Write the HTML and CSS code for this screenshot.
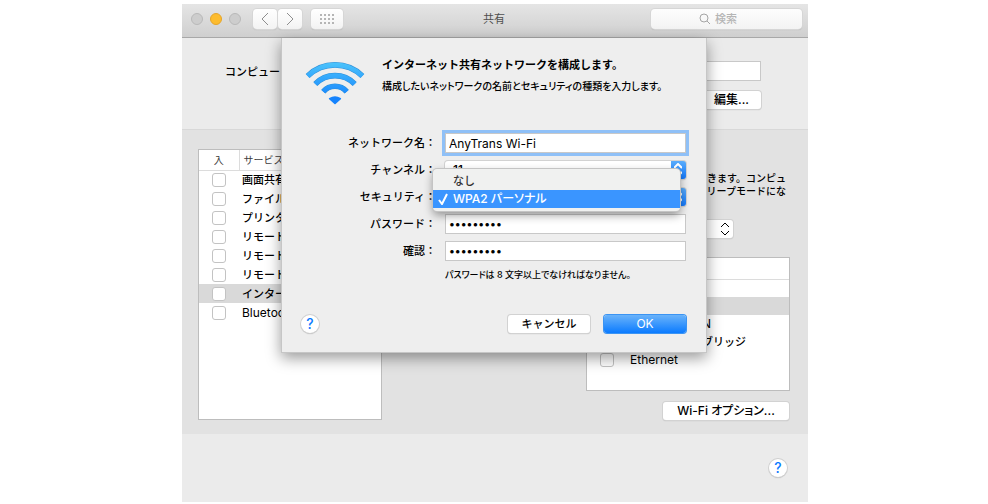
FILE: index.html
```html
<!DOCTYPE html>
<html lang="ja">
<head>
<meta charset="utf-8">
<title>共有</title>
<link rel="stylesheet" href="styles.css">
</head>
<body>
<main class="window">
  <header class="titlebar">
    <div class="lights">
      <span class="light"></span>
      <span class="light light-amber"></span>
      <span class="light"></span>
    </div>
    <nav class="nav">
      <button class="tool" type="button" aria-label="戻る"><svg width="8" height="14" viewBox="0 0 8 14"><path d="M7 1 1 7l6 6"/></svg></button>
      <button class="tool" type="button" aria-label="進む"><svg width="8" height="14" viewBox="0 0 8 14"><path d="m1 1 6 6-6 6"/></svg></button>
    </nav>
    <button class="tool tool-grid" type="button" aria-label="すべてを表示">
      <svg width="14" height="10" viewBox="0 0 14 10"><path class="dots" d="M0 0h2v2H0zM4 0h2v2H4zM8 0h2v2H8zM12 0h2v2h-2zM0 4h2v2H0zM4 4h2v2H4zM8 4h2v2H8zM12 4h2v2h-2zM0 8h2v2H0zM4 8h2v2H4zM8 8h2v2H8zM12 8h2v2h-2z"/></svg>
    </button>
    <h1 class="title">共有</h1>
    <label class="search">
      <svg width="12" height="12" viewBox="0 0 12 12"><circle cx="5" cy="5" r="4"/><path d="m8 8 3 3"/></svg>
      <input type="search" placeholder="検索" aria-label="検索">
    </label>
  </header>

  <section class="computer">
    <label for="computer-name">コンピュー</label>
    <div class="computer-fields">
      <input class="field" id="computer-name" type="text">
      <button class="button edit" type="button">編集...</button>
    </div>
  </section>

  <section class="pane">
    <div class="services">
      <table>
        <thead><tr><th class="on">入</th><th>サービス</th></tr></thead>
        <tbody>
          <tr><td class="on"><input type="checkbox" id="s1"></td><td><label for="s1">画面共有</label></td></tr>
          <tr><td class="on"><input type="checkbox" id="s2"></td><td><label for="s2">ファイル</label></td></tr>
          <tr><td class="on"><input type="checkbox" id="s3"></td><td><label for="s3">プリンタ</label></td></tr>
          <tr><td class="on"><input type="checkbox" id="s4"></td><td><label for="s4">リモート</label></td></tr>
          <tr><td class="on"><input type="checkbox" id="s5"></td><td><label for="s5">リモート</label></td></tr>
          <tr><td class="on"><input type="checkbox" id="s6"></td><td><label for="s6">リモート</label></td></tr>
          <tr class="selected"><td class="on"><input type="checkbox" id="s7"></td><td><label for="s7">インター</label></td></tr>
          <tr><td class="on"><input type="checkbox" id="s8"></td><td class="latin"><label for="s8">Bluetoo</label></td></tr>
        </tbody>
      </table>
    </div>
    <div class="details">
      <p class="note">できます。コンピュ<br>スリープモードにな</p>
      <span class="select source">
        <select aria-label="共有する接続経路"></select>
        <svg width="8" height="14" viewBox="0 0 8 14"><path d="m0 5 4-4 4 4M0 9l4 4 4-4"/></svg>
      </span>
      <div class="ports">
        <table>
          <thead><tr><th class="on"></th><th></th></tr></thead>
          <tbody>
            <tr><td class="on"></td><td></td></tr>
            <tr class="selected"><td class="on"></td><td></td></tr>
            <tr><td class="on"></td><td class="tail latin">N</td></tr>
            <tr><td class="on"></td><td class="tail">ブリッジ</td></tr>
            <tr><td class="on"><input type="checkbox" id="p5"></td><td class="latin"><label for="p5">Ethernet</label></td></tr>
          </tbody>
        </table>
      </div>
      <button class="button options" type="button">Wi-Fi オプション...</button>
    </div>
  </section>

  <footer class="footer"><button class="help" type="button">?</button></footer>

  <form class="sheet" role="dialog" aria-labelledby="sheet-title">
    <div class="intro">
      <svg class="wifi" width="60" height="44" viewBox="45 62 180 132">
        <defs>
          <linearGradient id="wave" gradientUnits="userSpaceOnUse" x1="0" y1="66" x2="0" y2="192">
            <stop offset="0" stop-color="#4cc4fb"/><stop offset="1" stop-color="#0b78fe"/>
          </linearGradient>
        </defs>
        <path class="edge" d="M53 107A118 118 0 0 1 217 107M76 131A82 82 0 0 1 194 131M100 154A46 46 0 0 1 170 154"/>
        <path class="wave" d="M53 107A118 118 0 0 1 217 107M76 131A82 82 0 0 1 194 131M100 154A46 46 0 0 1 170 154"/>
        <path class="dot" d="M119 175Q135 166 151 175L135 189Z"/>
      </svg>
      <div>
        <h2 id="sheet-title">インターネット共有ネットワークを構成します。</h2>
        <p>構成したいネットワークの名前とセキュリティの種類を入力します。</p>
      </div>
    </div>
    <div class="form">
      <label for="ssid">ネットワーク名：</label>
      <input class="field focused" id="ssid" type="text" value="AnyTrans Wi-Fi">
      <label for="channel">チャンネル：</label>
      <span class="select accent">
        <select id="channel"><option>11</option></select>
        <svg width="8" height="14" viewBox="0 0 8 14"><path d="m0 5 4-4 4 4M0 9l4 4 4-4"/></svg>
      </span>
      <label for="security">セキュリティ：</label>
      <span class="select accent">
        <select id="security"></select>
        <svg width="8" height="14" viewBox="0 0 8 14"><path d="m0 5 4-4 4 4M0 9l4 4 4-4"/></svg>
        <span class="menu" role="listbox" aria-label="セキュリティ">
          <span class="item" role="option">なし</span>
          <span class="item active" role="option" aria-selected="true"><svg width="10" height="12" viewBox="0 0 10 12"><path d="m1 7 3 4 5-10"/></svg>WPA2 パーソナル</span>
        </span>
      </span>
      <label for="password">パスワード：</label>
      <input class="field" id="password" type="password" value="123456789">
      <label for="confirm">確認：</label>
      <input class="field" id="confirm" type="password" value="123456789">
    </div>
    <p class="hint">パスワードは 8 文字以上でなければなりません。</p>
    <div class="actions">
      <button class="help" type="button">?</button>
      <button class="button cancel" type="button">キャンセル</button>
      <button class="button primary" type="submit">OK</button>
    </div>
  </form>
</main>
</body>
</html>
```
FILE: styles.css
```css
* { box-sizing: border-box; }

body {
  margin: 0;
  padding: 4px 180px 2px 182px;
  background: #fff;
  color: #000;
  font: 500 11px/18px Inter, "Noto Sans CJK JP", sans-serif;
}

h1, h2, p { margin: 0; }
button, input, select { font: inherit; color: inherit; }
svg { fill: none; stroke: currentColor; flex: none; }

.window {
  position: relative;
  display: flex;
  flex-direction: column;
  min-height: calc(100vh - 6px);
  background: #ebebeb;
}

/* Title bar */
.titlebar {
  display: flex;
  align-items: center;
  height: 34px;
  padding: 0 6px 3px 9px;
  background: linear-gradient(#e5e5e5, #cfcfcf);
  border-bottom: 1px solid #a8a8a8;
}
.lights { display: flex; gap: 7px; width: 62px; }
.light { width: 12px; height: 12px; border-radius: 50%; background: #cdcdcd; border: 1px solid #b9b9b9; }
.light-amber { background: #fdbc2e; border-color: #e5a52a; }
.nav { display: flex; gap: 1px; margin-right: 9px; }
.tool {
  display: flex;
  align-items: center;
  justify-content: center;
  width: 24px;
  height: 20px;
  padding: 0;
  border: 0;
  border-radius: 4px;
  background: linear-gradient(#fff, #f3f3f3);
  box-shadow: 0 0 0 1px #d6d6d6, 0 1px 1px #aaa;
  color: #8e8e8e;
}
.tool-grid { width: 32px; }
.dots { fill: #b5b5b5; stroke: none; }
.title { flex: 1; padding-right: 6px; text-align: center; font-size: 11px; font-weight: 400; color: #4e4e4e; }
.search {
  display: flex;
  align-items: center;
  justify-content: center;
  gap: 4px;
  width: 151px;
  height: 20px;
  padding-left: 48px;
  border-radius: 4px;
  background: linear-gradient(#fdfdfd, #f3f3f3);
  box-shadow: 0 0 0 1px #d6d6d6, 0 1px 1px #aaa;
  color: #a5a5a5;
}
.search input { flex: 1; min-width: 0; padding: 0; border: 0; background: none; outline: 0; }
.search input::placeholder { color: #b5b5b5; }

/* Shared controls */
.field {
  width: 100%;
  height: 20px;
  padding: 0 3px;
  border: 1px solid #c8c8c8;
  border-radius: 0;
  background: #fff;
  outline: 0;
}
.focused { box-shadow: 0 0 0 3px #8fc0f7; font-size: 12px; font-weight: 400; }
.button {
  height: 18px;
  padding: 0 12px;
  border: 0;
  border-radius: 3px;
  background: #fff;
  box-shadow: 0 0 0 1px #d2d2d2, 0 1px 1px #aaa;
  line-height: 18px;
  white-space: nowrap;
}
.button.edit { font-size: 12px; }
.button.primary { background: linear-gradient(#6ab3fa, #0b7bff); box-shadow: 0 0 0 1px #3b94f3; color: #fff; font-size: 12px; font-weight: 400; }
.help {
  width: 18px;
  height: 18px;
  padding: 0;
  border: 0;
  border-radius: 50%;
  background: #fff;
  box-shadow: 0 0 0 1px #d0d0d0, 0 1px 1px #aaa;
  color: #0a7aff;
  font-size: 14px;
}
input[type="checkbox"] {
  appearance: none;
  display: block;
  width: 14px;
  height: 14px;
  margin: 0 auto;
  border: 1px solid #c3c3c3;
  border-radius: 3px;
  background: #fff;
}
.select { position: relative; display: flex; height: 18px; }
.select select {
  appearance: none;
  width: 100%;
  height: 18px;
  padding: 0 8px;
  border: 0;
  border-radius: 3px;
  background: #fff;
  box-shadow: 0 0 0 1px #d2d2d2, 0 1px 1px #aaa;
  outline: 0;
}
.select > svg { position: absolute; right: 4px; top: 2px; stroke-width: 2; }
.accent > svg { color: #fff; }
.accent select {
  background: linear-gradient(#5aacfb, #1479fd) right / 15px 100% no-repeat, #fff;
  font-size: 12px;
}

/* Computer name */
.computer {
  display: flex;
  justify-content: space-between;
  height: 91px;
  padding: 23px 47px 0 43px;
  line-height: 22px;
}
.computer-fields { display: flex; flex-direction: column; align-items: flex-end; gap: 10px; width: 300px; }

/* Sharing pane */
.pane {
  display: flex;
  justify-content: space-between;
  padding: 19px 18px 14px 16px;
  background: #e2e2e2;
  border-top: 1px solid #d8d8d8;
}
.services { width: 184px; height: 271px; border: 1px solid #bdbdbd; background: #fff; }
table { width: 100%; border-collapse: collapse; table-layout: fixed; }
th, td { height: 19px; padding: 0 0 0 3px; text-align: left; line-height: 18px; white-space: nowrap; }
th { height: 20px; padding-left: 4px; border-bottom: 1px solid #dcdcdc; color: #3c3c3c; font-size: 10px; font-weight: 400; }
.on { width: 40px; padding: 0; text-align: center; }
th.on { border-right: 1px solid #dcdcdc; }
.latin { font-size: 12px; font-weight: 400; }
.selected { background: #d9d9d9; }
.details { display: flex; flex-direction: column; align-items: flex-end; width: 204px; padding-top: 23px; }
.note { padding-right: 4px; font-size: 10px; line-height: 13px; text-align: right; }
.source { width: 100px; margin: 22px 57px 19px 0; }
.source > svg { stroke-width: 1; stroke: #000; }
.ports { width: 100%; height: 134px; border: 1px solid #bdbdbd; background: #fff; }
.ports th { height: 21px; }
.ports td { height: 18px; }
.ports th.on { border-right: 0; }
.ports .tail { padding-left: 75px; }
.button.options { width: 126px; margin: 11px 1px 0 0; padding: 0; font-size: 12px; font-feature-settings: "palt"; }

.footer { display: flex; justify-content: flex-end; padding: 25px 21px 24px; }

/* Configuration sheet */
.sheet {
  position: absolute;
  top: 34px;
  left: 99px;
  right: 101px;
  padding: 18px 20px 19px 20px;
  background: #eee;
  border: 1px solid #c6c6c6;
  border-top: 0;
  box-shadow: 0 5px 14px #0006;
}
.intro { display: flex; gap: 17px; padding-left: 3px; }
.wifi { margin-top: 5px; }
.edge { stroke: #2f8fd8; stroke-width: 17; }
.wave { stroke: url(#wave); stroke-width: 14; }
.dot { fill: #1583fd; stroke: #1583fd; stroke-width: 5; stroke-linejoin: round; }
.intro h2 { font-size: 11px; line-height: 18px; }
.intro p { margin-top: 4px; font-size: 10px; line-height: 16px; white-space: nowrap; font-feature-settings: "palt"; }
.form {
  display: grid;
  grid-template-columns: 134px 1fr;
  grid-auto-rows: 20px;
  gap: 7px 9px;
  align-items: center;
  padding-top: 28px;
}
.form > label { text-align: right; white-space: nowrap; }
.menu {
  position: absolute;
  z-index: 1;
  top: -19px;
  left: -12px;
  right: 6px;
  padding: 3px 0;
  border-radius: 4px;
  background: #f0f1f0;
  box-shadow: 0 0 0 1px #c4c4c4, 0 4px 10px #0006;
}
.item { display: flex; align-items: center; height: 18px; padding-left: 20px; color: #333; }
.item.active { gap: 5px; padding-left: 5px; background: #3a95ff; color: #fff; font-size: 12px; font-feature-settings: "palt"; }
.active svg { stroke-width: 2; }
.hint { padding: 6px 0 0 143px; font-size: 9px; line-height: 16px; font-feature-settings: "palt"; }
.actions { display: flex; gap: 14px; align-items: center; padding-top: 32px; }
.actions .help { margin-right: auto; margin-left: -1px; }
.cancel, .primary { width: 82px; }
```
